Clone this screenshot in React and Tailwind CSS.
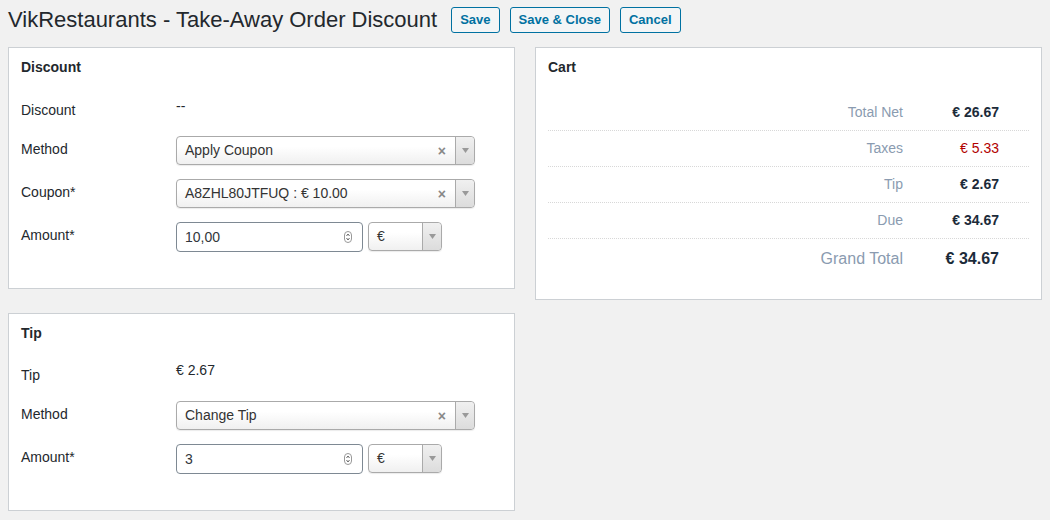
import React from "react";

const font = { fontFamily: '"Liberation Sans", Arial, sans-serif' };

const Arrow = () => (
  <svg width="7" height="5" viewBox="0 0 7 5">
    <path d="M0 0 L7 0 L3.5 5 Z" fill="#999" />
  </svg>
);

const Select = ({ value, width, clear = true }) => (
  <div
    className={`flex h-[29px] items-center rounded-[4px] border border-[#aaa] bg-[linear-gradient(#fff_35%,#f0f0f0)] shadow-[0_1px_1px_rgba(0,0,0,0.08)] ${width}`}
  >
    <span className="flex-1 truncate pl-2 text-[14px] text-[#333]">{value}</span>
    {clear && <span className="pr-[9px] text-[14px] font-bold leading-none text-[#888]">×</span>}
    <span className="flex h-full w-[19px] items-center justify-center rounded-r-[4px] border-l border-[#aaa] bg-[linear-gradient(#f0f0f0,#dcdcdc)]">
      <Arrow />
    </span>
  </div>
);

const NumberInput = ({ value }) => (
  <div className="flex h-[30px] w-[187px] items-center rounded-[4px] border border-[#7e8993] bg-white pl-2 pr-[10px]">
    <span className="flex-1 text-[14px] text-[#32373c]">{value}</span>
    <svg width="8" height="12" viewBox="0 0 8 12">
      <rect x="0.5" y="0.5" width="7" height="11" rx="3.5" fill="#fff" stroke="#999" />
      <path d="M2.5 5 L4 3 L5.5 5" fill="none" stroke="#555" strokeWidth="0.9" />
      <path d="M2.5 7 L4 9 L5.5 7" fill="none" stroke="#555" strokeWidth="0.9" />
    </svg>
  </div>
);

const Row = ({ label, children, first }) => (
  <div className={`flex items-start ${first ? "h-[29px]" : ""}`}>
    <div className={`w-[155px] text-[14px] leading-[16px] text-[#23282d] ${first ? "pt-[9px]" : "pt-[5px]"}`}>
      {label}
    </div>
    <div className="flex gap-[5px]">{children}</div>
  </div>
);

const Panel = ({ title, children, className = "" }) => (
  <div className={`border border-[#ccd0d4] bg-white px-3 pt-[9px] ${className}`}>
    <h3 className="text-[14px] font-bold leading-[20px] text-[#23282d]">{title}</h3>
    {children}
  </div>
);

const CartRow = ({ label, value, valueClass = "font-bold text-[#1c2b3a]", big }) => (
  <div
    className={`flex items-center justify-end pr-[30px] ${big ? "h-[40px]" : "h-[36px] border-b border-dotted border-[#d8d8d8]"}`}
  >
    <span className={`text-right text-[#8a9bb0] ${big ? "text-[16px]" : "text-[14px]"}`}>{label}</span>
    <span className={`w-[96px] text-right ${big ? "text-[16px]" : "text-[14px]"} ${valueClass}`}>
      {value}
    </span>
  </div>
);

export default function App() {
  return (
    <div className="min-h-[520px] w-full bg-[#f1f1f1] px-2 pt-[7px]" style={font}>
      <div className="flex h-[26px] items-center">
        <h1 className="mr-[14px] text-[22px] font-normal leading-none text-[#23282d]">
          VikRestaurants - Take-Away Order Discount
        </h1>
        <div className="flex gap-[10px]">
          {["Save", "Save & Close", "Cancel"].map((b) => (
            <button
              key={b}
              className="h-[26px] rounded-[3px] border border-[#0071a1] bg-[#f3f5f6] px-[8px] text-[13px] font-bold text-[#0071a1]"
            >
              {b}
            </button>
          ))}
        </div>
      </div>

      <div className="mt-[14px] grid grid-cols-2 items-start gap-5">
        <div className="flex flex-col gap-6">
          <Panel title="Discount" className="h-[242px]">
            <div className="mt-4 flex flex-col gap-[14px]">
              <Row label="Discount" first>
                <span className="pt-[5px] text-[14px] leading-[16px] text-[#23282d]">--</span>
              </Row>
              <Row label="Method">
                <Select value="Apply Coupon" width="w-[299px]" />
              </Row>
              <Row label="Coupon*">
                <Select value="A8ZHL80JTFUQ : € 10.00" width="w-[299px]" />
              </Row>
              <Row label="Amount*">
                <NumberInput value="10,00" />
                <Select value="€" width="w-[74px]" clear={false} />
              </Row>
            </div>
          </Panel>

          <Panel title="Tip" className="h-[198px]">
            <div className="mt-[15px] flex flex-col gap-[14px]">
              <Row label="Tip" first>
                <span className="pt-[4px] text-[14px] leading-[16px] text-[#23282d]">€ 2.67</span>
              </Row>
              <Row label="Method">
                <Select value="Change Tip" width="w-[299px]" />
              </Row>
              <Row label="Amount*">
                <NumberInput value="3" />
                <Select value="€" width="w-[74px]" clear={false} />
              </Row>
            </div>
          </Panel>
        </div>

        <Panel title="Cart" className="h-[253px]">
          <div className="mt-[18px]">
            <CartRow label="Total Net" value="€ 26.67" />
            <CartRow label="Taxes" value="€ 5.33" valueClass="text-[#b20000]" />
            <CartRow label="Tip" value="€ 2.67" />
            <CartRow label="Due" value="€ 34.67" />
            <CartRow label="Grand Total" value="€ 34.67" valueClass="font-bold text-[#1c2b3a]" big />
          </div>
        </Panel>
      </div>
    </div>
  );
}
